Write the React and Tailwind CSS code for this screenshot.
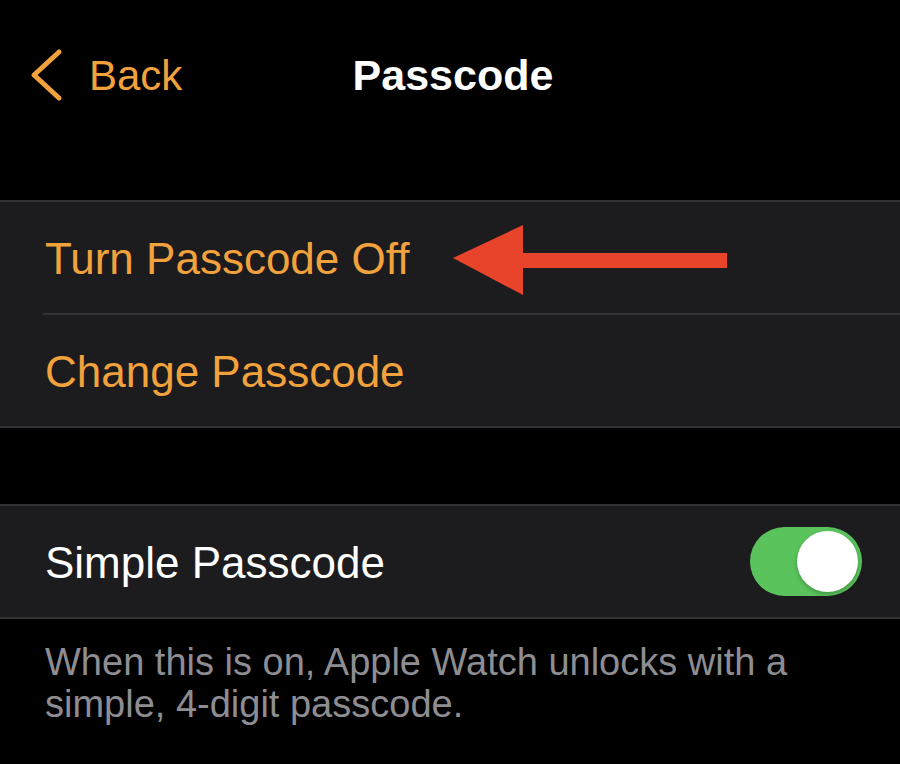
const orange = 'text-[#f2a23c]';

function Toggle({ on }) {
  return (
    <div className={`flex h-[69px] w-[112px] items-center rounded-full p-[4px] ${on ? 'justify-end bg-[#5ac35c]' : 'justify-start bg-[#39393d]'}`}>
      <div className="h-[61px] w-[61px] rounded-full bg-white shadow-[0_2px_4px_rgba(0,0,0,0.25)]" />
    </div>
  );
}

function Arrow() {
  return (
    <svg className="absolute left-[450px] top-[20px]" width="280" height="76" viewBox="0 0 280 76">
      <polygon points="3,36 73,3 73,31 277,31 277,46 73,46 73,73" fill="#e8432b" />
    </svg>
  );
}

export default function App() {
  return (
    <div className="min-h-[764px] w-[900px] overflow-hidden bg-black font-['Liberation_Sans',Arial,sans-serif]">
      {/* nav bar */}
      <div className="grid h-[150px] grid-cols-3 items-center">
        <div className={`flex items-center gap-[25px] pl-[28px] ${orange}`}>
          <svg width="36" height="54" viewBox="0 0 36 54" fill="none">
            <polyline points="31,4 6,27 31,50" stroke="#f2a23c" strokeWidth="5" strokeLinecap="round" strokeLinejoin="round" />
          </svg>
          <span className="pt-[2px] text-[42px] leading-none">Back</span>
        </div>
        <div className="pl-[6px] text-center text-[43px] font-bold leading-none text-white">Passcode</div>
        <div />
      </div>

      {/* passcode actions */}
      <div className="mt-[50px] border-y-2 border-[#323234] bg-[#1c1c1e]">
        <div className="relative flex h-[111px] items-center pl-[45px] pt-[3px]">
          <span className={`text-[44px] leading-none ${orange}`}>Turn Passcode Off</span>
          <Arrow />
        </div>
        <div className="ml-[43px] h-[2px] bg-[#333335]" />
        <div className="flex h-[111px] items-center pl-[45px] pt-[3px]">
          <span className={`text-[44px] leading-none ${orange}`}>Change Passcode</span>
        </div>
      </div>

      {/* simple passcode */}
      <div className="mt-[76px] border-y-2 border-[#323234] bg-[#1c1c1e]">
        <div className="flex h-[111px] items-center justify-between pl-[45px] pr-[38px]">
          <span className="pt-[3px] text-[44px] leading-none text-white">Simple Passcode</span>
          <Toggle on />
        </div>
      </div>
      <p className="px-[45px] pt-[22px] text-[38px] leading-[42px] text-[#8d8d92]">
        When this is on, Apple Watch unlocks with a simple, 4-digit passcode.
      </p>
    </div>
  );
}
